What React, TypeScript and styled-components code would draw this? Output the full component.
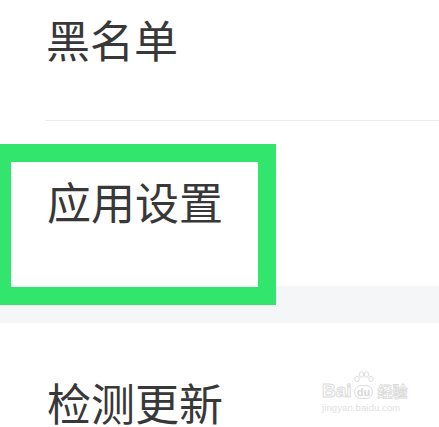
import styled, { createGlobalStyle } from "styled-components";

const GlobalStyle = createGlobalStyle`
    html, body {
        margin: 0;
        padding: 0;
        background: #ffffff;
    }
`;

const Page = styled.div`
    position: relative;
    width: 439px;
    height: 427px;
    overflow: hidden;
    display: flex;
    flex-direction: column;
    background: #ffffff;
    font-family: "Noto Sans CJK SC", "Noto Sans", sans-serif;
    color: #383838;
`;

const Item = styled.div<{ $height: number; $top: number }>`
    height: ${(p) => p.$height}px;
    box-sizing: border-box;
    flex-shrink: 0;
    padding: ${(p) => p.$top}px 0 0 47px;
    background: #ffffff;
`;

const Label = styled.div`
    font-size: 44px;
    font-weight: 400;
    line-height: 44px;
    white-space: nowrap;
`;

const FirstItem = styled.div`
    height: 121px;
    flex-shrink: 0;
    display: flex;
    flex-direction: column;
`;

const FirstLabelRow = styled.div`
    flex: 1;
    padding: 17px 0 0 46px;
`;

const Divider = styled.div`
    height: 1px;
    margin-left: 45px;
    background: #ececec;
`;

const Gap = styled.div<{ $height: number }>`
    height: ${(p) => p.$height}px;
    flex-shrink: 0;
    background: #f5f6f8;
`;

const Highlight = styled.div`
    position: absolute;
    left: -7px;
    top: 144px;
    width: 247px;
    height: 125px;
    border: 18px solid #32e56c;
    pointer-events: none;
`;

const Watermark = styled.div`
    position: absolute;
    left: 322px;
    top: 371px;
    display: flex;
    flex-direction: column;
    align-items: flex-start;
    color: #e2e2e2;
    font-family: "Liberation Sans", Arial, sans-serif;
`;

const MarkRow = styled.div`
    display: flex;
    align-items: flex-end;
    gap: 1px;
`;

const MarkBai = styled.span`
    font-size: 19px;
    line-height: 17px;
    font-weight: bold;
    color: #ffffff;
    -webkit-text-stroke: 1px #dcdcdc;
`;

const PawBox = styled.div`
    display: flex;
    flex-direction: column;
    align-items: center;
`;

const MarkDu = styled.span`
    font-size: 11px;
    line-height: 12px;
    padding: 0 2px;
    border: 1px solid #dcdcdc;
    border-radius: 7px;
    color: #d8d8d8;
    font-weight: bold;
`;

const MarkJy = styled.span`
    font-family: "Noto Sans CJK SC", sans-serif;
    font-size: 15px;
    line-height: 16px;
    font-weight: bold;
    color: #ffffff;
    -webkit-text-stroke: 0.8px #d8d8d8;
    margin-left: 2px;
`;

const MarkUrl = styled.span`
    font-size: 9.5px;
    line-height: 12px;
    margin-top: 3px;
    color: #e0e0e0;
    letter-spacing: 0.1px;
`;

function Paw(): JSX.Element {
    return (
        <svg width="22" height="14" viewBox="0 0 22 14">
            <g fill="none" stroke="#dcdcdc" strokeWidth="1">
                <ellipse cx="4" cy="8" rx="2.2" ry="2.6" />
                <ellipse cx="8.5" cy="3.5" rx="2.2" ry="2.8" />
                <ellipse cx="13.5" cy="3.5" rx="2.2" ry="2.8" />
                <ellipse cx="18" cy="8" rx="2.2" ry="2.6" />
            </g>
        </svg>
    );
}

function App(): JSX.Element {
    return (
        <>
            <GlobalStyle />
            <Page>
                <FirstItem>
                    <FirstLabelRow>
                        <Label>黑名单</Label>
                    </FirstLabelRow>
                    <Divider />
                </FirstItem>
                <Item $height={165} $top={58}>
                    <Label>应用设置</Label>
                </Item>
                <Gap $height={37} />
                <Item $height={165} $top={57}>
                    <Label>检测更新</Label>
                </Item>
                <Highlight />
                <Watermark>
                    <MarkRow>
                        <MarkBai>Bai</MarkBai>
                        <PawBox>
                            <Paw />
                            <MarkDu>du</MarkDu>
                        </PawBox>
                        <MarkJy>经验</MarkJy>
                    </MarkRow>
                    <MarkUrl>jingyan.baidu.com</MarkUrl>
                </Watermark>
            </Page>
        </>
    );
}

export default App;
